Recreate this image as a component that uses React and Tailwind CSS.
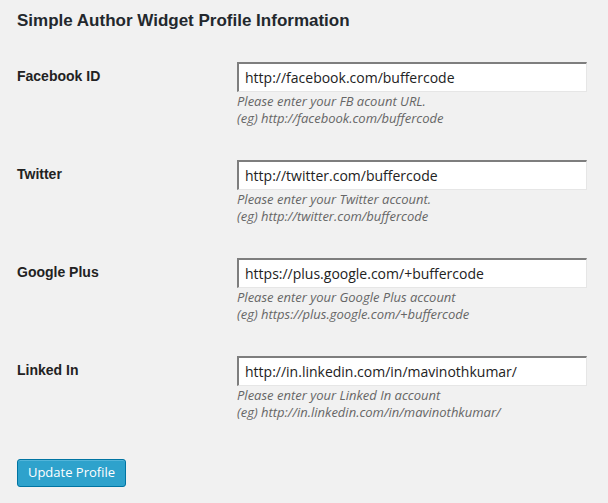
import React from "react";

const fields = [
  {
    label: "Facebook ID",
    value: "http://facebook.com/buffercode",
    help: "Please enter your FB acount URL.",
    example: "(eg) http://facebook.com/buffercode",
  },
  {
    label: "Twitter",
    value: "http://twitter.com/buffercode",
    help: "Please enter your Twitter account.",
    example: "(eg) http://twitter.com/buffercode",
  },
  {
    label: "Google Plus",
    value: "https://plus.google.com/+buffercode",
    help: "Please enter your Google Plus account",
    example: "(eg) https://plus.google.com/+buffercode",
  },
  {
    label: "Linked In",
    value: "http://in.linkedin.com/in/mavinothkumar/",
    help: "Please enter your Linked In account",
    example: "(eg) http://in.linkedin.com/in/mavinothkumar/",
  },
];

const App = () => {
  return (
    <div className="min-h-[503px] w-[608px] bg-[#f1f1f1] pl-[17px] pt-[11px] font-['Liberation_Sans',Arial,sans-serif]">
      <h2 className="text-[17px] leading-[20px] font-bold text-[#23282d]">
        Simple Author Widget Profile Information
      </h2>

      <div className="mt-[31px] flex flex-col gap-[33px]">
        {fields.map((field) => (
          <div key={field.label} className="flex">
            <label className="w-[220px] pt-[6px] text-[14px] leading-[17px] font-bold text-[#222]">
              {field.label}
            </label>
            <div className="flex flex-col">
              <input
                type="text"
                defaultValue={field.value}
                className="h-[30px] w-[350px] border-t-2 border-l-2 border-r border-b border-t-[#7e7e7e] border-l-[#7e7e7e] border-r-[#e6e6e6] border-b-[#e6e6e6] bg-white px-[6px] font-['Open_Sans',sans-serif] text-[14px] text-[#222] outline-none"
              />
              <p className="mt-[1px] font-['Open_Sans',sans-serif] text-[13px] leading-[17px] italic text-[#666]">
                {field.help}
                <br />
                {field.example}
              </p>
            </div>
          </div>
        ))}
      </div>

      <button className="mt-[38px] h-[28px] w-[109px] rounded-[3px] border border-[#0074a2] bg-[#2ea2cc] font-['Open_Sans',sans-serif] text-[13px] text-white shadow-[inset_0_1px_0_rgba(120,200,230,0.5)]">
        Update Profile
      </button>
    </div>
  );
};

export default App;
